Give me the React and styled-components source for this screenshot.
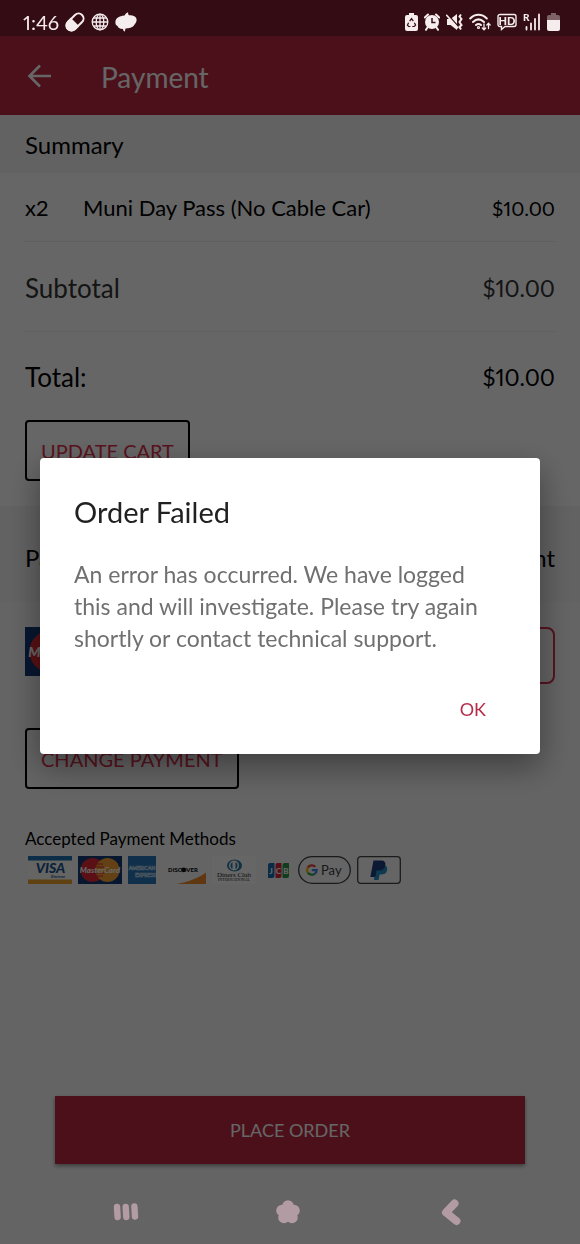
import React from "react";
import styled, { createGlobalStyle } from "styled-components";

const GlobalStyle = createGlobalStyle`
  * {
    box-sizing: border-box;
  }

  body {
    margin: 0;
    background-color: #fafafa;
    font-family: Lato, "Open Sans", sans-serif;
    font-variant-numeric: proportional-nums;
    color: #000;
  }

  button,
  input {
    font-family: inherit;
  }
`;

const Screen = styled.div`
  display: flex;
  flex-direction: column;
  min-height: 100vh;
`;

// The system bars stay above the dialog scrim, so their icons are not dimmed
const StatusGroup = styled.div`
  position: relative;
  z-index: 3;
  display: flex;
  align-items: center;
  gap: 6px;
  color: #f5ecee;
`;

const StatusBar = styled.div`
  display: flex;
  justify-content: space-between;
  align-items: center;
  height: 36px;
  padding: 8px 20px 0 23px;
  background-color: #821e32;
`;

const Clock = styled.span`
  font-size: 20px;
  line-height: 24px;
`;

const AppBar = styled.header`
  display: flex;
  align-items: center;
  gap: 48px;
  height: 79px;
  padding: 0 26px;
  background-color: #be2843;
  color: #fff;

  h1 {
    margin: 0;
    padding-top: 2px;
    font-size: 28px;
    line-height: 32px;
    font-weight: normal;
  }
`;

const BackButton = styled.button`
  display: flex;
  padding: 0;
  border: 0;
  background: none;
  color: inherit;
`;

const Content = styled.main`
  display: flex;
  flex-direction: column;
  flex-grow: 1;
`;

const Band = styled.div`
  display: flex;
  justify-content: space-between;
  align-items: center;
  height: ${(props) => (props.$tall ? 96 : 58)}px;
  padding: ${(props) => (props.$tall ? 8 : 2)}px 25px 0;
  background-color: #f5f5f5;

  h2,
  label {
    margin: 0;
    font-size: 24px;
    line-height: 32px;
    font-weight: normal;
  }
`;

const Row = styled.div`
  display: flex;
  align-items: center;
  height: ${(props) => (props.$item ? 69 : 90)}px;
  margin: 0 25px;
  padding-top: 2px;
  border-bottom: 1px solid #eee;
  font-size: ${(props) => (props.$item ? 22 : 26)}px;
  line-height: 32px;
  color: ${(props) => (props.$soft ? "#333" : "#000")};

  &:last-of-type {
    height: 88px;
    border-bottom: 0;
  }
`;

const Items = styled.section`
  background-color: #fff;
`;

const Quantity = styled.span`
  width: 58px;
`;

const Price = styled.span`
  margin-left: auto;
  font-size: ${(props) => (props.$small ? 20 : 23)}px;
`;

const OutlineButton = styled.button`
  align-self: flex-start;
  height: 61px;
  margin: 0 25px;
  padding: 0 14px;
  border: 2px solid #000;
  border-radius: 4px;
  background: none;
  font-size: 20px;
  color: #e0304f;
`;

const Actions = styled.footer`
  display: flex;
  padding-bottom: 25px;
`;

const PaymentRow = styled.div`
  display: flex;
  align-items: flex-start;
  justify-content: space-between;
  padding: 25px 25px 44px;
`;

const AmountInput = styled.input`
  width: 160px;
  height: 57px;
  padding: 0 16px;
  border: 2px solid #d8304e;
  border-radius: 8px;
  background: none;
  font-size: 22px;
`;

const Accepted = styled.section`
  padding: 38px 25px 0;

  h3 {
    margin: 0 0 5px;
    font-size: 17px;
    line-height: 24px;
    font-weight: normal;
  }
`;

const Logos = styled.div`
  display: flex;
  gap: 6px;
  padding: 0 3px;
`;

const PlaceOrder = styled.button`
  height: 68px;
  margin: auto 55px 0;
  border: 0;
  background-color: #be2843;
  box-shadow: 0 2px 4px rgba(0, 0, 0, 0.4);
  font-size: 18px;
  color: #fff;
`;

const NavBar = styled.nav`
  display: flex;
  height: 80px;
  padding: 16px 48px 0 45px;
`;

const NavButton = styled.button`
  position: relative;
  z-index: 3;
  display: flex;
  flex: 1;
  justify-content: center;
  align-items: center;
  padding: 0;
  border: 0;
  background: none;
  color: #b29ba3;
`;

const Scrim = styled.div`
  position: fixed;
  inset: 0;
  z-index: 2;
  display: flex;
  align-items: center;
  padding: 0 40px 32px;
  background-color: rgba(0, 0, 0, 0.6);
`;

const Dialog = styled.div`
  width: 100%;
  padding: 36px 34px 20px;
  border-radius: 4px;
  background-color: #fff;
  box-shadow: 0 12px 32px rgba(0, 0, 0, 0.4);

  h2 {
    margin: 0 0 28px;
    font-size: 29px;
    line-height: 36px;
    font-weight: normal;
    color: #212121;
  }

  p {
    margin: 0 20px 32px 0;
    font-size: 23px;
    line-height: 32px;
    color: #707070;
  }
`;

const DialogActions = styled.div`
  display: flex;
  justify-content: flex-end;

  button {
    height: 48px;
    padding: 0 20px 2px;
    border: 0;
    background: none;
    font-size: 18px;
    color: #b52d4b;
  }
`;

const PillIcon = () => (
  <svg width="20" height="20" viewBox="0 0 20 20">
    <g transform="rotate(-45 10 10)">
      <rect x="0" y="5" width="20" height="10" rx="5" fill="none" stroke="currentColor" strokeWidth="2" />
      <path d="M10 4H5a6 6 0 0 0 0 12h5z" fill="currentColor" />
    </g>
  </svg>
);

const GlobeIcon = () => (
  <svg width="18" height="18" viewBox="0 0 18 18" fill="none" stroke="currentColor" strokeWidth="1.3">
    <circle cx="9" cy="9" r="7.8" />
    <ellipse cx="9" cy="9" rx="3.8" ry="7.8" />
    <path d="M9 1v16M1 9h16M2.5 5h13M2.5 13h13" />
  </svg>
);

const BlobIcon = () => (
  <svg width="22" height="20" viewBox="0 0 22 20" fill="currentColor">
    <path d="M13 .2Q13 2.500 14 3.200C19 3.200 22 5 21.600 8.500C21.200 11 19.500 12 19 13.500C17.500 15.800 14 16 10.500 16.500Q10.300 18.500 9.500 19.800Q8 18.500 8 17C4.500 17 2.800 15.500 2.500 14C.8 13 .3 12 .4 10C.8 6 4 4 9.500 3.500Q10.500 1.200 13 .2z" />
  </svg>
);

const RecycleBatteryIcon = () => (
  <svg width="13" height="18" viewBox="0 0 13 18">
    <path d="M4 0h5v2h2a2 2 0 0 1 2 2v12a2 2 0 0 1-2 2H2a2 2 0 0 1-2-2V4a2 2 0 0 1 2-2h2z" fill="currentColor" />
    <path d="M4.700 8.200L6.500 5.600l1.800 2.600M9.400 9.800l1.200 2.300-1.400 1.400H7.300M5.400 13.500H3.700l-1.300-1.400 1.200-2.300" fill="none" stroke="#340c14" strokeWidth="1.200" />
  </svg>
);

const AlarmIcon = () => (
  <svg width="16" height="18" viewBox="0 0 16 18">
    <circle cx="8" cy="9" r="7" fill="currentColor" />
    <path d="M.8 4.500L4 1.500M15.200 4.500L12 1.500M3.500 14.500L2 16.800M12.500 14.500L14 16.800" stroke="currentColor" strokeWidth="2" strokeLinecap="round" />
    <path d="M8 5v4.500h3.500" fill="none" stroke="#340c14" strokeWidth="1.500" />
  </svg>
);

const MuteIcon = () => (
  <svg width="17" height="18" viewBox="0 0 17 18">
    <path d="M1 6h3.500L11 1v16L4.500 12H1z" fill="currentColor" />
    <path d="M1 .8L13 14.300" stroke="#340c14" strokeWidth="1.300" />
    <path d="M.2 1.800L12.200 15.300" stroke="currentColor" strokeWidth="1.600" />
    <path d="M15 1.500l-1.500 2 2 2.500-2 3 2 3-2 2 1.500 2.500" fill="none" stroke="currentColor" strokeWidth="2" />
  </svg>
);

const WifiIcon = () => (
  <svg width="22" height="18" viewBox="0 0 22 18" fill="none" stroke="currentColor" strokeWidth="2" strokeLinecap="round">
    <path d="M1.200 5.500C6 .6 13 .6 17.800 5.500M4 9c3.500-3.400 7.500-3.400 11 0M7 12c1.700-1.400 3.300-1.400 5 0" />
    <circle cx="9.500" cy="14.500" r=".6" />
    <path d="M15 11v5.500M13.300 15l1.700 1.800 1.700-1.800M19.500 15.500V10.500M17.900 12l1.600-1.700 1.600 1.700" strokeWidth="1.300" />
  </svg>
);

const HdIcon = () => (
  <svg width="20" height="18" viewBox="0 0 20 18">
    <path d="M3 1.500h14a2 2 0 0 1 2 2v8a2 2 0 0 1-2 2H8L4.500 16.500v-3H3a2 2 0 0 1-2-2v-8a2 2 0 0 1 2-2z" fill="none" stroke="currentColor" strokeWidth="1.400" />
    <text x="10" y="11.500" textAnchor="middle" fontSize="11" fontWeight="900" fill="currentColor">HD</text>
  </svg>
);

const SignalIcon = () => (
  <svg width="18" height="18" viewBox="0 0 18 18" overflow="visible">
    <text x="0" y="8" fontSize="10" fontWeight="900" fill="currentColor">R</text>
    <path d="M3.500 14v2.500M8 10.500v6M12 6v10.500M16 1.500v15" stroke="currentColor" strokeWidth="1.800" strokeLinecap="round" />
  </svg>
);

const BatteryIcon = () => (
  <svg width="13" height="18" viewBox="0 0 13 18">
    <path d="M4 0h5v2h2a2 2 0 0 1 2 2v4H0V4a2 2 0 0 1 2-2h2z" fill="#7d6268" />
    <path d="M0 7h13v9a2 2 0 0 1-2 2H2a2 2 0 0 1-2-2z" fill="currentColor" />
  </svg>
);

const ArrowIcon = () => (
  <svg width="27" height="26" viewBox="0 0 27 26" fill="none" stroke="currentColor" strokeWidth="2.600">
    <path d="M25 13H4M14 2.500L3.500 13 14 23.500" />
  </svg>
);

const VisaLogo = () => (
  <svg width="44" height="28" viewBox="0 0 44 28">
    <path d="M0 0h44v28H0z" fill="#fcfcfa" />
    <path d="M0 0h44v4.500H0z" fill="#1c70b4" />
    <path d="M0 23.500h44V28H0z" fill="#efa22e" />
    <text x="22.500" y="17" textAnchor="middle" fontSize="14" fontWeight="900" fontStyle="italic" fill="#1b5590">VISA</text>
    <text x="37" y="22" textAnchor="end" fontSize="4" fontWeight="700" fontStyle="italic" fill="#1b5590">Electron</text>
  </svg>
);

const MasterCardLogo = ({ width = 44, height = 28 }) => (
  <svg width={width} height={height} viewBox="0 0 44 28">
    <path d="M0 0h44v28H0z" fill="#123a78" />
    <circle cx="14.500" cy="14" r="12" fill="#e02a34" />
    <circle cx="29.500" cy="14" r="12" fill="#f7a335" />
    <path d="M18 8h7M17.500 11h8.500M17.500 17h8.500M18 20h7" stroke="#e02a34" strokeWidth="1" />
    <text x="22" y="17" textAnchor="middle" fontSize="8" fontWeight="900" fontStyle="italic" fill="#fff">MasterCard</text>
  </svg>
);

const AmexLogo = () => (
  <svg width="28" height="28" viewBox="0 0 28 28">
    <path d="M0 0h28v28H0z" fill="#2a76b8" />
    <text x="14" y="14" textAnchor="middle" fontSize="5" fontWeight="900" fill="none" stroke="#cfe2f2" strokeWidth=".5">AMERICAN</text>
    <text x="28" y="21" textAnchor="end" fontSize="5" fontWeight="900" fill="none" stroke="#cfe2f2" strokeWidth=".5">EXPRESS</text>
  </svg>
);

const DiscoverLogo = () => (
  <svg width="44" height="28" viewBox="0 0 44 28">
    <path d="M44 16.500V28H14C26 26 37 22 44 16.500z" fill="#ee8a2c" />
    <text x="21" y="16" textAnchor="middle" fontSize="6" fontWeight="900" fill="#111">DISCOVER</text>
    <circle cx="21.500" cy="13.800" r="2.400" fill="#111" />
  </svg>
);

const DinersLogo = () => (
  <svg width="44" height="28" viewBox="0 0 44 28">
    <path d="M0 0h44v28H0z" fill="#fff" />
    <ellipse cx="22.500" cy="9.500" rx="7.500" ry="6" fill="#2b7aa8" />
    <circle cx="22" cy="9.500" r="5" fill="#fff" />
    <path d="M20.500 6a4 4 0 0 0 0 7zM23.500 6a4 4 0 0 1 0 7z" fill="#2b7aa8" />
    <text x="22" y="21" textAnchor="middle" fontFamily="Liberation Serif" fontSize="7" fill="#222">Diners Club</text>
    <text x="22" y="25" textAnchor="middle" fontFamily="Liberation Serif" fontSize="4" fill="#222">INTERNATIONAL</text>
  </svg>
);

const JcbLogo = () => (
  <svg width="30" height="28" viewBox="0 0 30 28" fontSize="8" fontWeight="900" textAnchor="middle">
    <path d="M8 7h4.500v13a2 2 0 0 1-2 2H6V9a2 2 0 0 1 2-2z" fill="#1a6cb5" />
    <path d="M15.500 7h4v13a2 2 0 0 1-2 2h-4V9a2 2 0 0 1 2-2z" fill="#d9263a" />
    <path d="M22.500 7h4.500v13a2 2 0 0 1-2 2h-4.500V9a2 2 0 0 1 2-2z" fill="#2f9a48" />
    <text x="9" y="17.500" fill="#fff">J</text>
    <text x="16.500" y="17.500" fill="#fff">C</text>
    <text x="24" y="17.500" fill="#fff">B</text>
  </svg>
);

const GooglePayLogo = () => (
  <svg width="53" height="28" viewBox="0 0 53 28">
    <rect x=".7" y=".7" width="51.600" height="26.600" rx="13.300" fill="#fcfcfc" stroke="#3c4043" strokeWidth="1.300" />
    <g fill="none" strokeWidth="2.300">
      <path d="M17.300 10.800A4.800 4.800 0 0 0 9.800 11.600" stroke="#ea4335" />
      <path d="M9.800 11.600a4.800 4.800 0 0 0 0 5" stroke="#fbbc04" />
      <path d="M9.800 16.600a4.800 4.800 0 0 0 7.200 .9" stroke="#34a853" />
      <path d="M17 17.500a4.800 4.800 0 0 0 1.600-3.300h-4.800" stroke="#4285f4" />
    </g>
    <text x="23" y="19" fontSize="13" fill="#3c4043">Pay</text>
  </svg>
);

const PayPalLogo = () => (
  <svg width="44" height="28" viewBox="0 0 44 28">
    <rect x=".7" y=".7" width="42.600" height="26.600" rx="3" fill="#fcfcfc" stroke="#444" strokeWidth="1.300" />
    <path d="M19 9h8.500c2.500 1 3.200 3 2.500 5.500-.8 3-3 4-6 4h-1.300l-1.200 5.500h-4.500z" fill="#2790c3" />
    <path d="M16.500 4.500h7.500c3.500 0 5 2 4.300 5-.7 3.500-3 5-6.300 5h-2.500L18.300 21h-5z" fill="#1f3f84" />
  </svg>
);

const RecentsIcon = () => (
  <svg width="26" height="18" viewBox="0 0 26 18" stroke="currentColor" strokeWidth="6.400" strokeLinecap="round">
    <path d="M4 4l.6 10M12.700 4l.6 10M21.400 3.500l.6 10" />
  </svg>
);

const HomeIcon = () => (
  <svg width="26" height="26" viewBox="0 0 26 26" fill="currentColor">
    <circle cx="13" cy="7" r="5.800" />
    <circle cx="19" cy="11.500" r="5.800" />
    <circle cx="17" cy="18.500" r="5.800" />
    <circle cx="9" cy="18.500" r="5.800" />
    <circle cx="7" cy="11.500" r="5.800" />
    <circle cx="13" cy="13.500" r="9" />
  </svg>
);

const BackIcon = () => (
  <svg width="20" height="27" viewBox="0 0 20 27" fill="none" stroke="currentColor" strokeWidth="8" strokeLinecap="round" strokeLinejoin="round">
    <path d="M13.500 4.500L5 13.500l10.500 8.500" />
  </svg>
);

function OrderFailedDialog() {
  return (
    <Scrim>
      <Dialog role="alertdialog" aria-labelledby="dialog-title">
        <h2 id="dialog-title">Order Failed</h2>
        <p>
          An error has occurred. We have logged this and will investigate.
          Please try again shortly or contact technical support.
        </p>
        <DialogActions>
          <button type="button">OK</button>
        </DialogActions>
      </Dialog>
    </Scrim>
  );
}

export default function App() {
  return (
    <Screen>
      <GlobalStyle />
      <StatusBar>
        <StatusGroup>
          <Clock>1:46</Clock>
          <PillIcon />
          <GlobeIcon />
          <BlobIcon />
        </StatusGroup>
        <StatusGroup>
          <RecycleBatteryIcon />
          <AlarmIcon />
          <MuteIcon />
          <WifiIcon />
          <HdIcon />
          <SignalIcon />
          <BatteryIcon />
        </StatusGroup>
      </StatusBar>

      <AppBar>
        <BackButton type="button" aria-label="Back">
          <ArrowIcon />
        </BackButton>
        <h1>Payment</h1>
      </AppBar>

      <Content>
        <Band>
          <h2>Summary</h2>
        </Band>
        <Items>
          <Row $item>
            <Quantity>x2</Quantity>
            <span>Muni Day Pass (No Cable Car)</span>
            <Price $small>$10.00</Price>
          </Row>
          <Row $soft>
            <span>Subtotal</span>
            <Price>$10.00</Price>
          </Row>
          <Row>
            <span>Total:</span>
            <Price>$10.00</Price>
          </Row>
          <Actions>
            <OutlineButton type="button">UPDATE CART</OutlineButton>
          </Actions>
        </Items>

        <Band $tall>
          <h2>Payment</h2>
          <label htmlFor="amount">Amount</label>
        </Band>
        <PaymentRow>
          <MasterCardLogo width={77} height={49} />
          <AmountInput id="amount" />
        </PaymentRow>
        <OutlineButton type="button">CHANGE PAYMENT</OutlineButton>

        <Accepted>
          <h3>Accepted Payment Methods</h3>
          <Logos>
            <VisaLogo />
            <MasterCardLogo />
            <AmexLogo />
            <DiscoverLogo />
            <DinersLogo />
            <JcbLogo />
            <GooglePayLogo />
            <PayPalLogo />
          </Logos>
        </Accepted>

        <PlaceOrder type="button">PLACE ORDER</PlaceOrder>
      </Content>

      <NavBar>
        <NavButton type="button" aria-label="Recents">
          <RecentsIcon />
        </NavButton>
        <NavButton type="button" aria-label="Home">
          <HomeIcon />
        </NavButton>
        <NavButton type="button" aria-label="Back">
          <BackIcon />
        </NavButton>
      </NavBar>

      <OrderFailedDialog />
    </Screen>
  );
}
